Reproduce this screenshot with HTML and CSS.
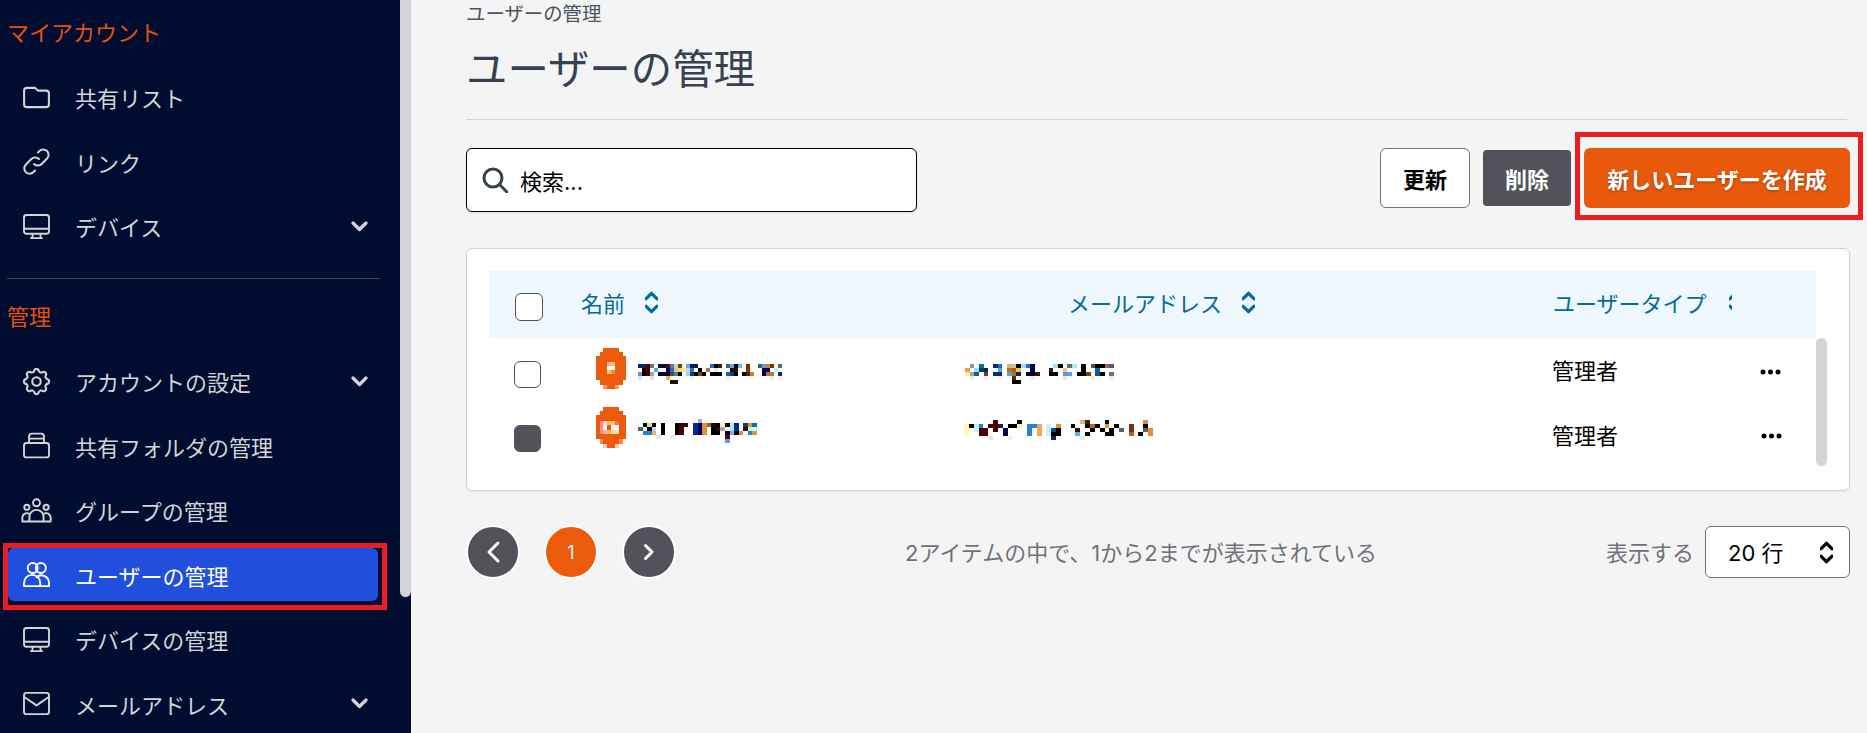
FILE: index.html
```html
<!DOCTYPE html>
<html lang="ja">
<head>
<meta charset="utf-8">
<title>ユーザーの管理</title>
<link rel="stylesheet" href="styles.css">
</head>
<body>
<div class="app">
  <aside class="sidebar">
    <h2 class="side-head">マイアカウント</h2>
    <ul class="nav">
      <li class="nav-item"><svg class="ico" viewBox="2.2 4.2 19.6 15.6"><path d="M3 7v10a2 2 0 002 2h14a2 2 0 002-2V9a2 2 0 00-2-2h-6l-2-2H5a2 2 0 00-2 2z"/></svg><span>共有リスト</span></li>
      <li class="nav-item"><svg class="ico" viewBox="2 2 20 20"><path d="M13.828 10.172a4 4 0 00-5.656 0l-4 4a4 4 0 105.656 5.656l1.102-1.101m-.758-4.899a4 4 0 005.656 0l4-4a4 4 0 00-5.656-5.656l-1.1 1.1"/></svg><span>リンク</span></li>
      <li class="nav-item"><svg class="ico" viewBox="1.2 1.7 21.6 20.1"><rect x="2" y="2.5" width="20" height="15" rx="2"/><path d="M2 13.5h20M9 18l-.5 3h7L15 18M7.5 21h9"/></svg><span>デバイス</span><svg class="chev" viewBox="0 0 17 11"><path d="M2 2l6.5 6.5L15 2"/></svg></li>
    </ul>
    <hr class="side-rule">
    <h2 class="side-head side-head-admin">管理</h2>
    <ul class="nav">
      <li class="nav-item"><svg class="ico" viewBox="2.4 2.4 19.2 19.2"><path d="M10.325 4.317c.426-1.756 2.924-1.756 3.35 0a1.724 1.724 0 002.573 1.066c1.543-.94 3.31.826 2.37 2.37a1.724 1.724 0 001.065 2.572c1.756.426 1.756 2.924 0 3.35a1.724 1.724 0 00-1.066 2.573c.94 1.543-.826 3.31-2.37 2.37a1.724 1.724 0 00-2.572 1.065c-.426 1.756-2.924 1.756-3.35 0a1.724 1.724 0 00-2.573-1.066c-1.543.94-3.31-.826-2.37-2.37a1.724 1.724 0 00-1.065-2.572c-1.756-.426-1.756-2.924 0-3.35a1.724 1.724 0 001.066-2.573c-.94-1.543.826-3.31 2.37-2.37.996.608 2.296.07 2.572-1.065z"/><circle cx="12" cy="12" r="3"/></svg><span>アカウントの設定</span><svg class="chev" viewBox="0 0 17 11"><path d="M2 2l6.5 6.5L15 2"/></svg></li>
      <li class="nav-item"><svg class="ico" viewBox="1.200 1.700 21.600 20.600"><rect x="2" y="10" width="20" height="11.500" rx="2"/><path d="M6 10V5a2.500 2.500 0 012.500-2.500h7A2.500 2.500 0 0118 5v5M6 6.500h12"/></svg><span>共有フォルダの管理</span></li>
      <li class="nav-item"><svg class="ico" viewBox="1.500 2.500 21 18"><circle cx="12" cy="5.500" r="2.700"/><circle cx="4.500" cy="9" r="2"/><circle cx="19.500" cy="9" r="2"/><path d="M6.500 20v-3.500a5.500 5.500 0 0111 0V20zM6.500 20H1v-3a3.500 3.500 0 014.800-3.200M17.500 20H23v-3a3.500 3.500 0 00-4.800-3.200"/></svg><span>グループの管理</span></li>
      <li class="nav-item is-active"><svg class="ico" viewBox="1.200 1.700 21.600 20.100"><circle cx="9" cy="6.500" r="4"/><circle cx="15.500" cy="6.500" r="4"/><path d="M2 21v-2.500a6.500 6.500 0 0113 0V21zM15 21h7v-2.500a6 6 0 00-10-4.500"/></svg><span>ユーザーの管理</span></li>
      <li class="nav-item"><svg class="ico" viewBox="1.200 1.700 21.600 20.100"><rect x="2" y="2.500" width="20" height="15" rx="2"/><path d="M2 13.500h20M9 18l-.5 3h7L15 18M7.500 21h9"/></svg><span>デバイスの管理</span></li>
      <li class="nav-item"><svg class="ico" viewBox="1.200 3.200 21.600 18.600"><rect x="2" y="4" width="20" height="17" rx="2"/><path d="M2.500 7.500L12 14l9.500-6.500"/></svg><span>メールアドレス</span><svg class="chev" viewBox="0 0 17 11"><path d="M2 2l6.500 6.500L15 2"/></svg></li>
    </ul>
    <div class="side-thumb"></div>
  </aside>

  <main class="main">
    <div class="crumb">ユーザーの管理</div>
    <h1 class="title">ユーザーの管理</h1>

    <div class="toolbar">
      <div class="search">
        <svg class="search-ico" viewBox="0 0 26 26"><circle cx="11" cy="11" r="9"/><path d="M17.500 17.500L25 25"/></svg>
        <span>検索...</span>
      </div>
      <div class="actions">
        <button class="btn btn-light">更新</button>
        <button class="btn btn-gray">削除</button>
        <button class="btn btn-orange">新しいユーザーを作成</button>
      </div>
    </div>

    <section class="card">
      <div class="thead">
        <span class="check check-head"></span>
        <div class="th th-name">名前<svg class="sort" viewBox="0.500 1.500 12 20"><path d="M1.500 8L6.500 3l5 5M1.500 15l5 5 5-5"/></svg></div>
        <div class="th th-mail">メールアドレス<svg class="sort" viewBox="0.500 1.500 12 20"><path d="M1.500 8L6.500 3l5 5M1.500 15l5 5 5-5"/></svg></div>
        <div class="th th-type">ユーザータイプ<svg class="sort" viewBox="0.500 1.500 12 20"><path d="M1.500 8L6.500 3l5 5M1.500 15l5 5 5-5"/></svg></div>
      </div>
      <div class="tbody">
        <div class="rows">
          <div class="row row-first">
            <span class="check"></span>
            <svg class="avatar" viewBox="0 0 30 41">
              <path fill="#ec5b0b" d="M7 0h16v4h4v4h3v24h-3v5h-4v4H7v-4H4v-5H0V8h4V4h3z"/>
              <rect x="11" y="14" width="4" height="4" fill="#f4a7a0"/><rect x="15" y="18" width="4" height="4" fill="#fff"/><rect x="11" y="18" width="4" height="4" fill="#fff8e0"/><rect x="15" y="14" width="4" height="4" fill="#f9c068"/><rect x="11" y="22" width="4" height="4" fill="#f9c068"/><rect x="15" y="22" width="4" height="4" fill="#ef8060"/>
              <rect x="7" y="37" width="4" height="4" fill="#f49a68"/><rect x="19" y="37" width="4" height="4" fill="#f49a68"/>
            </svg>
            <svg class="mosaic mosaic-name" width="156" height="24" viewBox="0 0 39 6">
              <rect x="0" y="0" fill="#0b2c5e"/><rect x="1" y="0" fill="#0b2c5e"/><rect x="2" y="0" fill="#4a0505"/><rect x="3" y="0" fill="#6b7780"/><rect x="5" y="0" fill="#0b0b3a"/><rect x="6" y="0" fill="#0b0b3a"/><rect x="7" y="0" fill="#5a0a0a"/><rect x="8" y="0" fill="#4f7fa0"/><rect x="9" y="0" fill="#d8d0b0"/><rect x="10" y="0" fill="#5a4a20"/><rect x="11" y="0" fill="#fff8b0"/><rect x="12" y="0" fill="#5aaef0"/><rect x="13" y="0" fill="#0a1a60"/><rect x="14" y="0" fill="#0a1a60"/><rect x="18" y="0" fill="#1e6fc0"/><rect x="19" y="0" fill="#000"/><rect x="20" y="0" fill="#3a1a00"/><rect x="22" y="0" fill="#4a6070"/><rect x="23" y="0" fill="#5ab0f0"/><rect x="24" y="0" fill="#000"/><rect x="25" y="0" fill="#70b8f0"/><rect x="27" y="0" fill="#803000"/><rect x="30" y="0" fill="#406070"/><rect x="31" y="0" fill="#50a0e0"/><rect x="32" y="0" fill="#d08030"/><rect x="33" y="0" fill="#604000"/><rect x="34" y="0" fill="#fff5c0"/><rect x="35" y="0" fill="#4f6a70"/>
              <rect x="1" y="1" fill="#000"/><rect x="2" y="1" fill="#500000"/><rect x="4" y="1" fill="#50a8f0"/><rect x="7" y="1" fill="#000050"/><rect x="8" y="1" fill="#1a70d0"/><rect x="9" y="1" fill="#f8c070"/><rect x="10" y="1" fill="#f8d890"/><rect x="11" y="1" fill="#ffe880"/><rect x="12" y="1" fill="#c0d8f0"/><rect x="13" y="1" fill="#3a70b0"/><rect x="15" y="1" fill="#000"/><rect x="17" y="1" fill="#c07030"/><rect x="19" y="1" fill="#f0e8c8"/><rect x="23" y="1" fill="#1a0a20"/><rect x="24" y="1" fill="#400000"/><rect x="27" y="1" fill="#803000"/><rect x="31" y="1" fill="#000060"/><rect x="32" y="1" fill="#000060"/><rect x="34" y="1" fill="#c0f0ff"/>
              <rect x="0" y="2" fill="#7090a8"/><rect x="1" y="2" fill="#000"/><rect x="2" y="2" fill="#500000"/><rect x="3" y="2" fill="#a0a8a0"/><rect x="5" y="2" fill="#000030"/><rect x="6" y="2" fill="#000030"/><rect x="7" y="2" fill="#000030"/><rect x="8" y="2" fill="#804010"/><rect x="9" y="2" fill="#3090b0"/><rect x="10" y="2" fill="#000"/><rect x="12" y="2" fill="#a0d0ff"/><rect x="13" y="2" fill="#203a70"/><rect x="14" y="2" fill="#000"/><rect x="15" y="2" fill="#904010"/><rect x="16" y="2" fill="#000"/><rect x="18" y="2" fill="#000030"/><rect x="19" y="2" fill="#000"/><rect x="20" y="2" fill="#000"/><rect x="22" y="2" fill="#305a90"/><rect x="23" y="2" fill="#0040a0"/><rect x="24" y="2" fill="#000"/><rect x="26" y="2" fill="#000"/><rect x="27" y="2" fill="#602000"/><rect x="28" y="2" fill="#d08020"/><rect x="31" y="2" fill="#000050"/><rect x="32" y="2" fill="#c07020"/><rect x="33" y="2" fill="#a08040"/><rect x="35" y="2" fill="#08306a"/>
              <rect x="0" y="3" fill="#e4e4e4"/><rect x="3" y="3" fill="#e4e4e4"/><rect x="7" y="3" fill="#f0b050"/><rect x="13" y="3" fill="#f4f0ec"/><rect x="22" y="3" fill="#f4ece4"/><rect x="33" y="3" fill="#e8e8e8"/><rect x="35" y="3" fill="#f8f0e8"/>
              <rect x="8" y="4" fill="#201000"/><rect x="9" y="4" fill="#201000"/>
            </svg>
            <svg class="mosaic mosaic-mail" width="149" height="24" viewBox="0 0 32 6" preserveAspectRatio="none">
              <rect x="1" y="0" fill="#7aa0a8"/><rect x="3" y="0" fill="#0a6ab0"/><rect x="6" y="0" fill="#0a2a70"/><rect x="7" y="0" fill="#1a70c0"/><rect x="9" y="0" fill="#c8b890"/><rect x="10" y="0" fill="#e0c090"/><rect x="11" y="0" fill="#000"/><rect x="12" y="0" fill="#a0e0ff"/><rect x="13" y="0" fill="#2a70b0"/><rect x="14" y="0" fill="#000050"/><rect x="19" y="0" fill="#a0e0ff"/><rect x="20" y="0" fill="#000"/><rect x="22" y="0" fill="#607070"/><rect x="23" y="0" fill="#a0ecff"/><rect x="25" y="0" fill="#000"/><rect x="27" y="0" fill="#405a60"/><rect x="28" y="0" fill="#000"/><rect x="29" y="0" fill="#000"/><rect x="30" y="0" fill="#a06060"/><rect x="31" y="0" fill="#505a80"/>
              <rect x="0" y="1" fill="#f0a040"/><rect x="2" y="1" fill="#80e8f8"/><rect x="3" y="1" fill="#0a3a60"/><rect x="4" y="1" fill="#003050"/><rect x="7" y="1" fill="#50a8e8"/><rect x="9" y="1" fill="#c07010"/><rect x="10" y="1" fill="#b06000"/><rect x="11" y="1" fill="#f0c060"/><rect x="14" y="1" fill="#000060"/><rect x="18" y="1" fill="#401000"/><rect x="21" y="1" fill="#f8c070"/><rect x="25" y="1" fill="#000"/><rect x="28" y="1" fill="#0a60b0"/>
              <rect x="0" y="2" fill="#f8e8b0"/><rect x="1" y="2" fill="#a0a890"/><rect x="2" y="2" fill="#205a70"/><rect x="4" y="2" fill="#704020"/><rect x="6" y="2" fill="#0a2a70"/><rect x="7" y="2" fill="#0a2a70"/><rect x="9" y="2" fill="#50a0f0"/><rect x="10" y="2" fill="#808040"/><rect x="11" y="2" fill="#102a50"/><rect x="13" y="2" fill="#000050"/><rect x="14" y="2" fill="#000"/><rect x="15" y="2" fill="#401000"/><rect x="18" y="2" fill="#000"/><rect x="19" y="2" fill="#000"/><rect x="21" y="2" fill="#8090b0"/><rect x="22" y="2" fill="#50a0f0"/><rect x="24" y="2" fill="#000"/><rect x="25" y="2" fill="#000"/><rect x="26" y="2" fill="#804000"/><rect x="28" y="2" fill="#0a50a0"/><rect x="29" y="2" fill="#000"/><rect x="31" y="2" fill="#607080"/>
              <rect x="1" y="3" fill="#e8e8f0"/><rect x="4" y="3" fill="#e8f0f8"/><rect x="7" y="3" fill="#f8f0f0"/><rect x="10" y="3" fill="#702000"/><rect x="14" y="3" fill="#f0e8f0"/><rect x="21" y="3" fill="#e8e8e8"/><rect x="27" y="3" fill="#f4ece8"/><rect x="31" y="3" fill="#eceef4"/>
              <rect x="10" y="4" fill="#000"/><rect x="11" y="4" fill="#000"/>
            </svg>
            <span class="role">管理者</span>
            <svg class="dots" viewBox="0 0 21 6"><circle cx="3" cy="3" r="2.500"/><circle cx="10.500" cy="3" r="2.500"/><circle cx="18" cy="3" r="2.500"/></svg>
          </div>
          <div class="row row-second">
            <span class="check is-filled"></span>
            <svg class="avatar" viewBox="0 0 30 41">
              <path fill="#ec5b0b" d="M7 0h16v4h4v4h3v24h-3v5h-4v4H7v-4H4v-5H0V8h4V4h3z"/>
              <rect x="4" y="14" width="3" height="13" fill="#f08a90"/><rect x="7" y="14" width="4" height="4" fill="#fbd8c8"/><rect x="7" y="18" width="4" height="5" fill="#fff0f0"/><rect x="7" y="23" width="4" height="4" fill="#f7b0a0"/><rect x="11" y="14" width="4" height="4" fill="#f9c068"/><rect x="11" y="23" width="4" height="4" fill="#f9c068"/><rect x="15" y="14" width="4" height="4" fill="#f9c068"/><rect x="15" y="18" width="8" height="5" fill="#fff"/><rect x="15" y="23" width="8" height="4" fill="#fbd8a0"/><rect x="19" y="14" width="4" height="4" fill="#f07050"/>
              <rect x="4" y="32" width="3" height="5" fill="#f28a50"/><rect x="23" y="32" width="4" height="5" fill="#f28a50"/><rect x="7" y="37" width="4" height="4" fill="#fbc8a8"/><rect x="19" y="37" width="4" height="4" fill="#fbc8a8"/>
            </svg>
            <svg class="mosaic mosaic-name" width="119" height="24" viewBox="0 0 26 6" preserveAspectRatio="none">
              <rect x="13" y="0" fill="#a8a8d0"/>
              <rect x="1" y="1" fill="#000"/><rect x="2" y="1" fill="#f0d0b0"/><rect x="3" y="1" fill="#000"/><rect x="5" y="1" fill="#000"/><rect x="8" y="1" fill="#000"/><rect x="9" y="1" fill="#400000"/><rect x="10" y="1" fill="#301010"/><rect x="12" y="1" fill="#0a2a80"/><rect x="13" y="1" fill="#000060"/><rect x="14" y="1" fill="#e09030"/><rect x="15" y="1" fill="#a06020"/><rect x="16" y="1" fill="#200800"/><rect x="17" y="1" fill="#000"/><rect x="18" y="1" fill="#fff0b0"/><rect x="19" y="1" fill="#000"/><rect x="20" y="1" fill="#c0e0ff"/><rect x="21" y="1" fill="#002a80"/><rect x="23" y="1" fill="#0a3a80"/><rect x="24" y="1" fill="#e0902a"/><rect x="25" y="1" fill="#0a70b0"/>
              <rect x="0" y="2" fill="#4a7060"/><rect x="2" y="2" fill="#000"/><rect x="3" y="2" fill="#c0d8f0"/><rect x="5" y="2" fill="#000"/><rect x="8" y="2" fill="#000"/><rect x="9" y="2" fill="#500000"/><rect x="12" y="2" fill="#002a80"/><rect x="13" y="2" fill="#000060"/><rect x="14" y="2" fill="#e09030"/><rect x="16" y="2" fill="#000"/><rect x="17" y="2" fill="#300810"/><rect x="18" y="2" fill="#a0a8c0"/><rect x="20" y="2" fill="#a0f0ff"/><rect x="21" y="2" fill="#002a80"/><rect x="22" y="2" fill="#fff"/><rect x="23" y="2" fill="#400800"/><rect x="24" y="2" fill="#b0f8ff"/><rect x="25" y="2" fill="#d0f8ff"/>
              <rect x="1" y="3" fill="#2a80d0"/><rect x="2" y="3" fill="#2a80d0"/><rect x="3" y="3" fill="#f0b060"/><rect x="5" y="3" fill="#000"/><rect x="8" y="3" fill="#000"/><rect x="9" y="3" fill="#500000"/><rect x="12" y="3" fill="#002a80"/><rect x="13" y="3" fill="#000060"/><rect x="14" y="3" fill="#e09030"/><rect x="16" y="3" fill="#000"/><rect x="17" y="3" fill="#000"/><rect x="19" y="3" fill="#200010"/><rect x="20" y="3" fill="#60c0f0"/><rect x="21" y="3" fill="#000"/><rect x="22" y="3" fill="#e09030"/><rect x="24" y="3" fill="#2a80d0"/><rect x="25" y="3" fill="#e09030"/>
              <rect x="4" y="4" fill="#e4e4f0"/><rect x="7" y="4" fill="#f8e8e0"/><rect x="19" y="4" fill="#600000"/><rect x="19" y="5" fill="#5aa0e0"/>
            </svg>
            <svg class="mosaic mosaic-mail" width="189" height="24" viewBox="0 0 39 6" preserveAspectRatio="none">
              <rect x="11" y="0" fill="#000"/><rect x="1" y="0" fill="#fff"/><rect x="6" y="0" fill="#500000"/><rect x="24" y="0" fill="#e8b080"/><rect x="25" y="0" fill="#402000"/><rect x="29" y="0" fill="#000"/><rect x="37" y="0" fill="#e09030"/>
              <rect x="0" y="1" fill="#fff8b0"/><rect x="1" y="1" fill="#000"/><rect x="2" y="1" fill="#c0f0f0"/><rect x="3" y="1" fill="#2a80d0"/><rect x="5" y="1" fill="#500000"/><rect x="6" y="1" fill="#500000"/><rect x="7" y="1" fill="#0a2a50"/><rect x="9" y="1" fill="#000"/><rect x="10" y="1" fill="#000"/><rect x="11" y="1" fill="#fff0a0"/><rect x="13" y="1" fill="#2a80d8"/><rect x="14" y="1" fill="#2a80d8"/><rect x="15" y="1" fill="#f0a860"/><rect x="17" y="1" fill="#d0f0ff"/><rect x="19" y="1" fill="#e09030"/><rect x="22" y="1" fill="#000"/><rect x="25" y="1" fill="#000"/><rect x="26" y="1" fill="#c06020"/><rect x="27" y="1" fill="#000"/><rect x="29" y="1" fill="#e09030"/><rect x="31" y="1" fill="#000"/><rect x="34" y="1" fill="#803010"/><rect x="37" y="1" fill="#000"/>
              <rect x="0" y="2" fill="#fff8b0"/><rect x="2" y="2" fill="#c0f0f0"/><rect x="3" y="2" fill="#500000"/><rect x="4" y="2" fill="#500000"/><rect x="6" y="2" fill="#500000"/><rect x="8" y="2" fill="#000050"/><rect x="13" y="2" fill="#2a80d8"/><rect x="15" y="2" fill="#f0a860"/><rect x="17" y="2" fill="#d0f0ff"/><rect x="18" y="2" fill="#0a4a9a"/><rect x="19" y="2" fill="#000"/><rect x="23" y="2" fill="#400800"/><rect x="26" y="2" fill="#000"/><rect x="28" y="2" fill="#000"/><rect x="30" y="2" fill="#000"/><rect x="32" y="2" fill="#5a6060"/><rect x="34" y="2" fill="#803010"/><rect x="37" y="2" fill="#606060"/><rect x="38" y="2" fill="#e09030"/>
              <rect x="0" y="3" fill="#fff8b0"/><rect x="3" y="3" fill="#500000"/><rect x="4" y="3" fill="#500000"/><rect x="8" y="3" fill="#000040"/><rect x="13" y="3" fill="#2a80d8"/><rect x="15" y="3" fill="#f0a860"/><rect x="17" y="3" fill="#d0f0ff"/><rect x="18" y="3" fill="#000"/><rect x="19" y="3" fill="#000"/><rect x="23" y="3" fill="#60b0e8"/><rect x="25" y="3" fill="#000"/><rect x="29" y="3" fill="#000"/><rect x="30" y="3" fill="#000"/><rect x="34" y="3" fill="#c06010"/><rect x="36" y="3" fill="#000"/><rect x="38" y="3" fill="#e09030"/>
              <rect x="5" y="4" fill="#e8e8e8"/><rect x="9" y="4" fill="#e8f0f8"/><rect x="18" y="4" fill="#0a2a60"/><rect x="24" y="4" fill="#e8e8e8"/>
            </svg>
            <span class="role">管理者</span>
            <svg class="dots" viewBox="0 0 21 6"><circle cx="3" cy="3" r="2.500"/><circle cx="10.500" cy="3" r="2.500"/><circle cx="18" cy="3" r="2.500"/></svg>
          </div>
        </div>
        <div class="table-thumb"></div>
      </div>
    </section>

    <nav class="pager">
      <div class="pages">
        <span class="page page-gray"><svg viewBox="0 0 16 24"><path d="M13 3L4 12l9 9"/></svg></span>
        <span class="page page-orange">1</span>
        <span class="page page-gray"><svg viewBox="0 0 16 24"><path d="M4.500 5.500L11 12l-6.500 6.500"/></svg></span>
      </div>
      <div class="pager-info">2アイテムの中で、1から2までが表示されている</div>
      <div class="per-page">
        <span class="per-label">表示する</span>
        <div class="select"><span class="select-value">20 行</span><svg viewBox="0.500 1.500 12 20"><path d="M1.500 8L6.500 3l5 5M1.500 15l5 5 5-5"/></svg></div>
      </div>
    </nav>
  </main>
</div>
</body>
</html>
```

FILE: styles.css
```css
* { box-sizing: border-box; }
html, body { margin: 0; height: 100%; overflow: hidden; }
body {
  font-family: Inter, "Noto Sans CJK JP", sans-serif;
  font-size: 22px;
  color: #000;
  background: #f4f4f4;
}
.app { display: flex; height: 733px; overflow: hidden; }

/* sidebar */
.sidebar {
  position: relative;
  flex: 0 0 411px;
  height: 733px;
  overflow: hidden;
  background: #000d30;
}
.side-head {
  margin: 0 0 4.5px;
  padding-left: 7px;
  font-size: 22px;
  font-weight: 400;
  line-height: 66px;
  color: #ea4f0c;
}
.side-head-admin { margin: 0; line-height: 76px; }
.nav { list-style: none; margin: 0; padding: 0; display: flex; flex-direction: column; gap: 11.5px; }
.nav-item {
  position: relative;
  display: flex;
  align-items: center;
  height: 53px;
  margin: 0 33px 0 8px;
  padding: 0 10px 0 15px;
  border-radius: 6px;
  color: #d4d4d8;
  flex: none;
}
.nav-item > span { margin-left: 25px; }
.ico { width: 27px; height: 27px; flex: none; overflow: visible; fill: none; stroke: currentColor; stroke-width: 1.5; stroke-linejoin: round; stroke-linecap: round; }
.chev { width: 17px; height: 11px; margin-left: auto; fill: none; stroke: currentColor; stroke-width: 3.2; stroke-linecap: round; stroke-linejoin: round; }
.is-active { background: #1f4fdc; color: #fff; }
.is-active::after {
  content: "";
  position: absolute;
  left: -5px; top: -5px; right: -9px; bottom: -9px;
  border: 5px solid #ed1c24;
  pointer-events: none;
}
.side-rule { height: 1px; margin: 25px 31px 0 7px; border: 0; background: #3f4658; }
.side-thumb {
  position: absolute;
  top: 0; right: 0;
  width: 11px;
  height: 597px;
  border-radius: 0 0 6px 6px;
  background: #d4d4d8;
}

/* main */
.main { flex: 1; min-width: 0; padding: 0 17px 0 55px; }
.crumb { height: 28px; font-size: 19.4px; line-height: 28px; color: #4b5563; }
.title {
  box-sizing: content-box;
  height: 82px;
  margin: 0 3px 0 0;
  padding-bottom: 9px;
  font-size: 41.4px;
  font-weight: 400;
  line-height: 82px;
  color: #374151;
  border-bottom: 1px solid #d4d4d8;
}
.toolbar { display: flex; justify-content: space-between; align-items: flex-start; margin: 28px 0 0; }
.search {
  display: flex;
  align-items: center;
  width: 451px;
  height: 64px;
  padding-left: 15px;
  background: #fff;
  border: 1.5px solid #000;
  border-radius: 6px;
  box-shadow: 0 1px 2px rgba(0,0,0,.08);
}
.search-ico { width: 26px; height: 26px; margin-right: 12px; fill: none; stroke: #374151; stroke-width: 3; stroke-linecap: round; }
.actions { display: flex; align-items: center; gap: 13px; }
.btn {
  font: 700 22px Inter, "Noto Sans CJK JP", sans-serif;
  padding: 0;
  border-radius: 6px;
}
.btn-light { width: 90px; height: 60px; background: #fff; border: 1px solid #71717a; color: #000; }
.btn-gray { width: 88px; height: 56px; background: #52525b; border: 0; color: #fff; border-radius: 4px; }
.btn-orange {
  position: relative;
  width: 266px;
  height: 60px;
  background: #e8590c;
  border: 0;
  color: #fff;
  text-shadow: 0 1px 3px rgba(0,0,0,.35);
}
.btn-orange::after {
  content: "";
  position: absolute;
  left: -9px; top: -16px; right: -13px; bottom: -12px;
  border: 5px solid #ed1c24;
  pointer-events: none;
}

/* card */
.card {
  width: 1384px;
  height: 243px;
  margin-top: 36px;
  padding: 22px 0 0 22px;
  background: #fff;
  border: 1px solid #d4d4d8;
  border-radius: 6px;
  box-shadow: 0 1px 2px rgba(0,0,0,.06);
}
.thead { display: flex; align-items: center; width: 1327px; height: 67px; background: #f0f8ff; color: #0369a1; }
.check { display: block; width: 27px; height: 27px; flex: none; background: #fff; border: 1px solid #52525b; border-radius: 6px; }
.check-head { margin: 5px 0 0 26px; width: 28px; height: 28px; }
.th { display: flex; align-items: center; white-space: nowrap; overflow: hidden; margin-top: -5px; }
.th-name { margin-left: 38px; width: 487px; }
.th-mail { width: 485px; }
.th-type { width: 179px; }
.th-type .sort { margin-left: 22px; }
.sort { width: 13px; height: 23px; margin-left: 20px; flex: none; fill: none; stroke: currentColor; stroke-width: 3; stroke-linecap: round; stroke-linejoin: round; }
.tbody { display: flex; }
.rows { width: 1327px; }
.row { display: flex; align-items: flex-start; height: 64.5px; padding-left: 25px; }
.is-filled { background: #52525b; border-color: #52525b; }
.avatar { display: block; width: 30px; height: 41px; flex: none; margin-left: 55px; }
.mosaic { display: block; flex: none; shape-rendering: crispEdges; }
.mosaic rect { width: 1px; height: 1px; }
.row-first .check { margin-top: 23px; }
.row-first .avatar { margin-top: 10px; }
.row-first .mosaic-name { margin: 26px 0 0 12px; }
.row-first .mosaic-mail { margin: 26px 0 0 171px; }
.row-first .role { margin: 17px 0 0 438px; }
.row-first .dots { margin-top: 31px; }
.row-second .check { margin-top: 22px; }
.row-second .avatar { margin-top: 4px; }
.row-second .mosaic-name { margin: 16px 0 0 12px; }
.row-second .mosaic-mail { margin: 17px 0 0 207px; }
.row-second .role { margin: 17px 0 0 399px; }
.row-second .dots { margin: 30px 0 0 1px; }
.role { line-height: 32px; width: 208px; flex: none; }
.dots { width: 21px; height: 6px; flex: none; fill: #000; }
.table-thumb { width: 11px; height: 128px; background: #d4d4d8; border-radius: 6px; }

/* pager */
.pager { display: flex; align-items: center; height: 54px; margin: 34px 0 0; }
.pages { display: flex; gap: 24px; }
.page {
  display: flex;
  align-items: center;
  justify-content: center;
  width: 54px;
  height: 54px;
  border: 2px solid #fff;
  border-radius: 50%;
  color: #fff;
  font-size: 18px;
}
.page svg { width: 16px; height: 24px; fill: none; stroke: #fff; stroke-width: 3; stroke-linecap: round; stroke-linejoin: round; }
.page-gray { background: #52525b; }
.page-orange { background: #ec5b0b; }
.pager-info { flex: 1; padding-bottom: 3px; text-align: center; color: #71717a; }
.per-page { display: flex; align-items: center; gap: 11px; }
.per-label { padding-bottom: 3px; color: #71717a; }
.select {
  display: flex;
  align-items: center;
  justify-content: space-between;
  width: 145px;
  height: 52px;
  padding: 0 16px 0 22px;
  background: #fff;
  border: 1px solid #71717a;
  border-radius: 6px;
}
.select-value { padding-bottom: 3px; }
.select svg { width: 13px; height: 23px; fill: none; stroke: #000; stroke-width: 3; stroke-linecap: round; stroke-linejoin: round; }
```
